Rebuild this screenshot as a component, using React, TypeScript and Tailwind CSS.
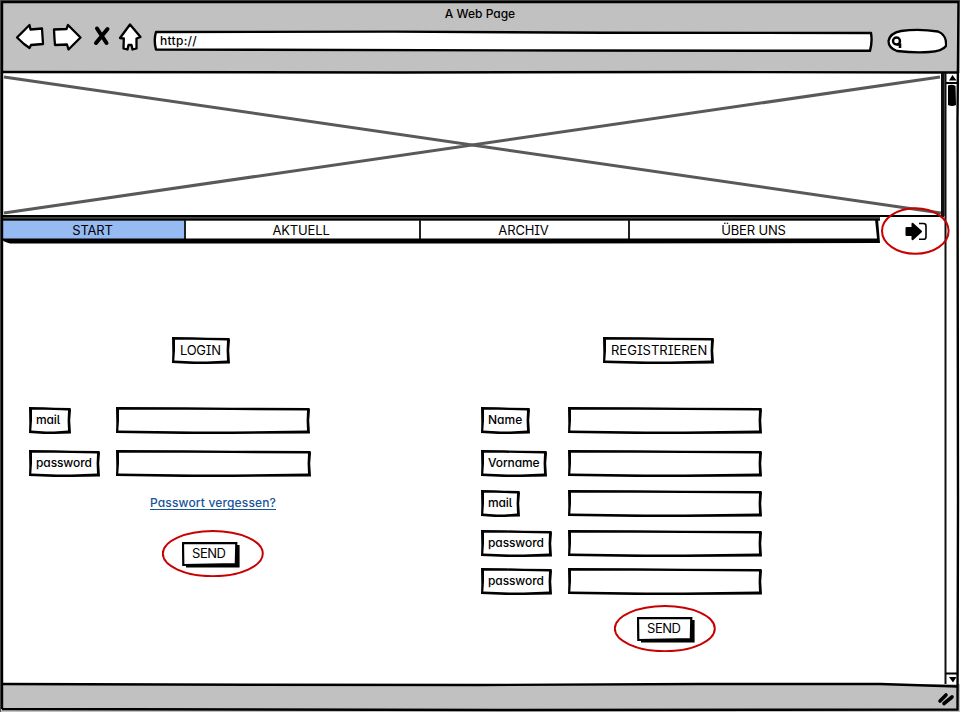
import React from "react";

const FACE =
  "font-[Inter,'Open_Sans',sans-serif] [font-feature-settings:'cv11','cv08','ss02'] leading-none whitespace-nowrap";
const CAPS = `${FACE} text-[13px] text-black`;
const TEXT = `${FACE} text-[12px] font-medium text-black`;

/* Hand-drawn rectangular outline */
function Sketch({ w, h }: { w: number; h: number }) {
  return (
    <svg className="absolute left-0 top-0 overflow-visible" width={w} height={h}>
      <path
        fillRule="evenodd"
        d={`M0 0L${w * 0.35} .3L${w * 0.6} .8L${w - 0.5} 1L${w} 3L${w - 0.8} ${h * 0.5}L${w} ${h - 0.6}L${w * 0.6} ${h}L${w * 0.35} ${h}L0 ${h - 1}L.3 ${h * 0.6}Z
        M3 2.8L3 ${h * 0.5}L2.3 ${h - 3.5}L${w * 0.4} ${h - 2.6}L${w * 0.6} ${h - 2.6}L${w - 3} ${h - 3.4}L${w - 3.4} ${h * 0.5}L${w - 3} 3.6L${w * 0.6} 3.1L${w * 0.35} 2.8Z`}
      />
    </svg>
  );
}

function Label({ text, w, caps = false, track = "" }: { text: string; w: number; caps?: boolean; track?: string }) {
  return (
    <div className={`relative flex h-[27px] shrink-0 items-center ${caps ? "pl-[8px]" : "pb-[2px] pl-[7px]"}`} style={{ width: w }}>
      <Sketch w={w} h={27} />
      <span className={`${caps ? CAPS : TEXT} ${track}`}>{text}</span>
    </div>
  );
}

function Row({ text, w, track, input = 194 }: { text: string; w: number; track: string; input?: number }) {
  return (
    <div className="flex">
      <div className="w-[87px]">
        <Label text={text} w={w} track={track} />
      </div>
      <div className="relative h-[27px]" style={{ width: input }}>
        <Sketch w={input} h={27} />
      </div>
    </div>
  );
}

function Send({ inset }: { inset: string }) {
  return (
    <div className="relative h-[47px] w-[102px] pt-[12px]">
      <svg className="absolute left-0 top-0" width="102" height="47" fill="none">
        <ellipse cx="50.8" cy="23.6" rx="50" ry="22.6" stroke="#c90000" strokeWidth="2" />
      </svg>
      <div className={`relative flex h-[26px] w-[58px] items-center pb-[4px] pl-[10px] ${inset}`}>
        <svg className="absolute left-0 top-0" width="58" height="26">
          <path d="M4 3H57.6V25.6H4Z" />
          <path d="M1 .8L54.3 1.2L53.8 22L1.3 23Z" fill="#fff" stroke="#000" strokeWidth="2.2" />
        </svg>
        <span className={`${CAPS} relative tracking-[-0.45px]`}>SEND</span>
      </div>
    </div>
  );
}

const tabs = [
  { t: "START", c: "w-[183px] bg-[#95bbf2]" },
  { t: "AKTUELL", c: "w-[235px] border-l-2 border-[#222] pr-[3px]" },
  { t: "ARCHIV", c: "w-[209px] border-l-2 border-[#222] pr-[2px]" },
  { t: "ÜBER UNS", c: "w-[249px] border-l-2 border-[#222]" },
];

export default function App() {
  return (
    <div className="relative flex h-[712px] w-[960px] flex-col overflow-hidden bg-white">
      <header className="flex h-[73px] shrink-0 flex-col bg-[#c1c1c1] pt-[8px]">
        <div className={`${TEXT} h-[18px] text-center`}>A Web Page</div>
        <div className="flex h-[26px] pl-[15px]">
          <svg className="-mt-[4px] h-[30px] w-[138px]" fill="#fff" stroke="#000" strokeWidth="2.3" strokeLinejoin="round" strokeLinecap="round" viewBox="15 22 138 30">
            <path d="M17 37.5L29.5 25L30.5 29.5L42 28.5L43 44L31 45L29.5 48L24 44Z" />
            <path d="M54 29.5L66.5 29L68 25L80.5 37.5L68.5 49.5L67 44.5L55 45L54.5 39Z" />
            <path d="M97 28.5L106.5 43M107.5 29L96 43" strokeWidth="4" />
            <path d="M130 24.5L140.5 37L136.5 38.5L136.5 48.5L132.5 49.5L131.5 45L128.5 45L127.5 49.5L123.5 48.5L123.8 38.5L120 38Z" />
          </svg>
          <div className="relative mt-[4px] flex h-[22px] w-[720px] items-center">
            <svg className="absolute left-0 top-0" width="720" height="22" fill="#fff" stroke="#000" strokeWidth="2.4" strokeLinejoin="round">
              <path d="M3 2L240 1.6L450 2.8L718 3Q719.5 12 717 20.8L420 20.5L3 19.5Q.5 10 3 2Z" />
            </svg>
            <span className={`${TEXT} relative pl-[7px] tracking-[0.3px]`}>http://</span>
          </div>
          <svg className="ml-[14px] mt-[2px]" width="60" height="26" fill="#fff" stroke="#000" strokeWidth="2.3">
            <path d="M10 23Q1.5 20 1.5 13Q3 5 14 3Q32 .5 51 3.5Q60 7 59 18Q55 23.5 42 24Q28 25 10 23Z" />
            <circle cx="9.5" cy="13" r="3.5" strokeWidth="2.4" />
            <path d="M10 16.5H13V20" strokeWidth="2.6" />
          </svg>
        </div>
      </header>
      <div className="flex h-[611px] shrink-0">
        <main className="flex w-[944px] flex-col">
          <div className="h-[144px] border-b-2 border-black">
            <svg width="944" height="142" stroke="#595959" strokeWidth="3">
              <path d="M4 4L941 140M4 140L940 4" />
            </svg>
          </div>
          <div className="flex h-[27px]">
            <nav className="relative flex h-[27px] w-[880px] pb-[5px] pl-[1px] pt-[3px]">
              <svg className="absolute left-0 top-0" width="880" height="27">
                <path d="M0 0H880V3.6H0Z" fill="#454745" />
                <path d="M0 1.8H880V3.6H0Z" fill="#000" />
                <path d="M875 2L878 2L880 26L540 26.6L10 26.4Q3 25 1 21.5L877 21.5Z" fill="#000" />
              </svg>
              {tabs.map((x) => (
                <div key={x.t} className={`flex h-[19px] items-center justify-center pt-[2px] ${x.c}`}>
                  <span className={`${CAPS} tracking-[-0.15px]`}>{x.t}</span>
                </div>
              ))}
            </nav>
            <div className="relative">
              <svg className="absolute -top-[11px] left-0" width="72" height="50" fill="none">
                <ellipse cx="35.3" cy="25" rx="33.3" ry="22.8" stroke="#c90000" strokeWidth="2" />
                <path d="M26.5 22H32.5V17.8L41 25.5L32.5 33.2V29H26.5Z" fill="#000" stroke="#000" strokeWidth="2" strokeLinejoin="round" />
                <path d="M39 17.5H43.5Q46 17.5 46 20V31Q46 33.3 43.5 33.3H39" stroke="#000" strokeWidth="1.6" />
              </svg>
            </div>
          </div>
          <div className="flex pt-[93px]">
            <section className="w-[452px] pl-[29px]">
              <div className="ml-[143px]">
                <Label caps text="LOGIN" w={58} track="tracking-[-0.3px]" />
              </div>
              <div className="mt-[43px] flex flex-col gap-[16px]">
                <Row text="mail" w={42} track="tracking-[-0.15px]" />
                <Row text="password" w={71} track="tracking-[-0.1px]" input={195} />
              </div>
              <a className={`${FACE} ml-[121px] mt-[20px] block h-[13px] w-[126px] border-b border-[#17549a] text-[12px] font-medium tracking-[0.15px] text-[#17549a]`}>Passwort vergessen?</a>
              <div className="ml-[133px] mt-[20px]">
                <Send inset="ml-[20px]" />
              </div>
            </section>
            <section className="pl-[29px]">
              <div className="ml-[122px]">
                <Label caps text="REGISTRIEREN" w={111} track="tracking-[0px]" />
              </div>
              <div className="mt-[43px] flex flex-col">
                <Row text="Name" w={49} track="tracking-[0px]" />
                <div className="h-[16px]" />
                <Row text="Vorname" w={66} track="tracking-[-0.1px]" />
                <div className="h-[13px]" />
                <Row text="mail" w={39} track="tracking-[-0.15px]" />
                <div className="h-[13px]" />
                <Row text="password" w={71} track="tracking-[-0.1px]" />
                <div className="h-[11px]" />
                <Row text="password" w={71} track="tracking-[-0.1px]" />
              </div>
              <div className="ml-[133px] mt-[10px]">
                <Send inset="ml-[23px]" />
              </div>
            </section>
          </div>
        </main>
        <aside className="h-full w-[16px]">
          <svg width="16" height="611" viewBox="944 73 16 611">
            <path d="M945.5 73V684" stroke="#111" strokeWidth="2" />
            <path d="M946 83H958M946 673.5H958" stroke="#000" strokeWidth="1.8" />
            <path d="M952.5 75L956.5 80.5H949ZM949 677H956.5L953 682.5Z" />
            <path d="M948 85.5Q952 84 955.5 86L956 105Q952 107 948 105Z" />
          </svg>
        </aside>
      </div>
      <footer className="h-[28px] shrink-0 bg-[#c1c1c1]">
        <svg className="ml-auto" width="30" height="28" stroke="#000" strokeLinecap="round" strokeWidth="3.6">
          <path d="M10 17L16 11M14 19.5L22 13" />
        </svg>
      </footer>
      {/* window frame strokes drawn over the panels */}
      <svg className="pointer-events-none absolute left-0 top-0" width="960" height="712" fill="none" stroke="#000">
        <path d="M.5 0V712M0 .5H960" stroke="#555" strokeWidth="1" />
        <path d="M2 709V2H958.5L957.5 120L958 500L957.5 709.5L500 710L2 709" strokeWidth="2.4" />
        <path d="M2 72L400 72.5L700 72L958 72.5M2 684L250 684.7L480 685L700 684L880 684L958 686.5" strokeWidth="2.4" />
        <path d="M942.8 73V216" strokeWidth="3.6" stroke="#111" />
      </svg>
    </div>
  );
}
